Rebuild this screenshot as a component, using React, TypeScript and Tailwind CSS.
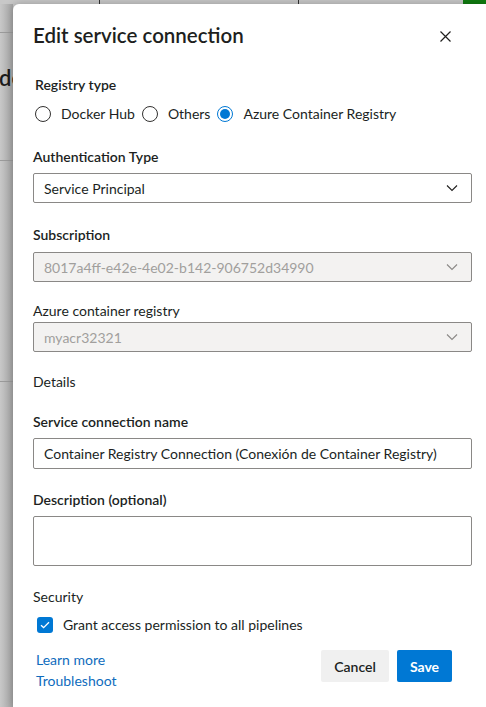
import React from "react";

const font = { fontFamily: "Lato, 'Noto Sans', sans-serif" };

function Chevron({ disabled }: { disabled?: boolean }) {
  return (
    <svg width="12" height="8" viewBox="0 0 12 8" className="shrink-0">
      <path
        d="M1 1.5 L6 6.5 L11 1.5"
        fill="none"
        stroke={disabled ? "#8a8886" : "#201f1e"}
        strokeWidth="1.1"
      />
    </svg>
  );
}

function Radio({ checked, label }: { checked?: boolean; label: string }) {
  return (
    <div className="flex items-center">
      {checked ? (
        <span className="w-4 h-4 rounded-full border border-[#0078d4] flex items-center justify-center">
          <span className="w-[10px] h-[10px] rounded-full bg-[#0078d4]" />
        </span>
      ) : (
        <span className="w-4 h-4 rounded-full border border-[#323130]" />
      )}
      <span className="ml-[10px] text-[14px] leading-5 text-[#201f1e]">{label}</span>
    </div>
  );
}

function SelectBox({ value, disabled }: { value: string; disabled?: boolean }) {
  return (
    <div
      className={
        disabled
          ? "h-[30px] border border-[#8a8886] rounded-[2px] bg-[#f3f2f1] flex items-center justify-between pl-[10px] pr-[13px]"
          : "h-[30px] border border-[#8a8886] rounded-[2px] bg-white flex items-center justify-between pl-[10px] pr-[13px]"
      }
    >
      <span className={disabled ? "text-[14px] text-[#a19f9d]" : "text-[14px] text-[#201f1e]"}>{value}</span>
      <Chevron disabled={disabled} />
    </div>
  );
}

export default function App() {
  return (
    <div className="w-[486px] h-[707px] overflow-hidden bg-[#c8c8c8] flex flex-col" style={font}>
      {/* top background bar */}
      <div className="h-[4px] flex shrink-0">
        <div className="w-[100px] border-r border-[#333]" />
        <div className="w-[199px] border-r border-[#333]" />
        <div className="flex-1" />
        <div className="w-[23px] bg-[#107c10]" />
      </div>
      <div className="flex flex-1">
        {/* left background strip */}
        <div className="w-[13px] shrink-0 flex flex-col bg-gradient-to-r from-[#c8c8c8] to-[#a5a5a5]">
          <div className="h-[29px] border-b border-[#9a9a9a]" />
          <div className="h-[128px] border-b border-[#9a9a9a] overflow-hidden">
            <div className="mt-[31px] -ml-[1px] text-[22px] font-semibold leading-7 text-[#1b1b1b] whitespace-nowrap">de</div>
          </div>
          <div className="h-[221px] border-b border-[#9a9a9a]" />
          <div className="flex-1" />
        </div>
        {/* dialog panel */}
        <div className="flex-1 bg-white rounded-tl-[6px] pt-[17px] pl-5 pr-[14px] flex flex-col shadow-[0_0_8px_rgba(0,0,0,0.25)]">
          <div className="h-7 flex items-center justify-between">
            <span className="text-[20.5px] font-semibold text-[#201f1e]">Edit service connection</span>
            <svg width="11" height="11" viewBox="0 0 11 11" className="mr-[21px] mt-[2px]">
              <path d="M0.5 0.5 L10.5 10.5 M10.5 0.5 L0.5 10.5" stroke="#201f1e" strokeWidth="1.2" />
            </svg>
          </div>

          <div className="pl-[2px]">
            <div className="mt-[26px] text-[14px] leading-5 font-semibold text-[#201f1e]">Registry type</div>
            <div className="mt-[9px] flex items-center gap-[7px]">
              <Radio label="Docker Hub" />
              <Radio label="Others" />
              <Radio checked label="Azure Container Registry" />
            </div>
          </div>

          <div className="mt-[23px] text-[14px] leading-5 font-semibold text-[#201f1e]">Authentication Type</div>
          <div className="mt-[6px]">
            <SelectBox value="Service Principal" />
          </div>

          <div className="mt-[22px] text-[14px] leading-5 font-semibold text-[#201f1e]">Subscription</div>
          <div className="mt-[7px]">
            <SelectBox disabled value="8017a4ff-e42e-4e02-b142-906752d34990" />
          </div>

          <div className="mt-[19px] text-[14px] leading-5 text-[#201f1e]">Azure container registry</div>
          <div className="mt-[1px]">
            <SelectBox disabled value="myacr32321" />
          </div>

          <div className="mt-5 text-[14px] leading-5 text-[#201f1e]">Details</div>

          <div className="mt-5 text-[14px] leading-5 font-semibold text-[#201f1e]">Service connection name</div>
          <div className="mt-[6px] h-[31px] border border-[#8a8886] rounded-[2px] flex items-center pl-[10px] text-[14px] text-[#201f1e] whitespace-nowrap overflow-hidden">
            Container Registry Connection (Conexión de Container Registry)
          </div>

          <div className="mt-[21px] text-[14px] leading-5 font-semibold text-[#201f1e]">Description (optional)</div>
          <div className="mt-[6px] h-[50px] border border-[#8a8886] rounded-[2px]" />

          <div className="mt-[21px] text-[14px] leading-5 text-[#201f1e]">Security</div>
          <div className="mt-2 flex items-center pl-1">
            <span className="w-4 h-4 rounded-[3px] bg-[#0078d4] flex items-center justify-center">
              <svg width="10" height="8" viewBox="0 0 10 8">
                <path d="M1 4.2 L3.6 6.6 L9 1.2" fill="none" stroke="white" strokeWidth="1.3" />
              </svg>
            </span>
            <span className="ml-[10px] text-[14px] leading-5 text-[#201f1e]">Grant access permission to all pipelines</span>
          </div>

          <div className="mt-[15px] flex justify-between pr-5">
            <div className="flex flex-col pl-[3px] gap-[1px]">
              <span className="text-[14px] leading-5 text-[#0f6cbd]">Learn more</span>
              <span className="text-[14px] leading-5 text-[#0f6cbd]">Troubleshoot</span>
            </div>
            <div className="flex gap-2 items-start">
              <button className="h-8 w-[68px] rounded-[2px] bg-[#f0f0f0] text-[14px] font-semibold text-[#201f1e]">Cancel</button>
              <button className="h-8 w-[55px] rounded-[2px] bg-[#0078d4] text-[14px] font-bold text-white">Save</button>
            </div>
          </div>
        </div>
      </div>
    </div>
  );
}
